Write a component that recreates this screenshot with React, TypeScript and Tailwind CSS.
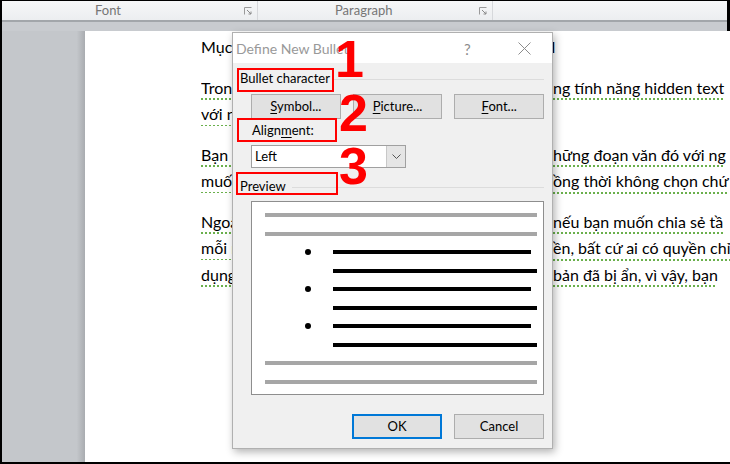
const docFont = { fontFamily: 'Lato, "Noto Sans", sans-serif' }
const uiFont = { fontFamily: 'Lato, "Noto Sans", sans-serif' }

function Launcher() {
  return (
    <svg width="8" height="8" viewBox="0 0 8 8" className="block">
      <path d="M0.5 7.5V0.5H7.5" fill="none" stroke="#9a9a9a" strokeWidth="1" />
      <path d="M3 3L7 7M7 4.5V7H4.5" fill="none" stroke="#8a8a8a" strokeWidth="1" />
    </svg>
  )
}

const lines = [
  { left: 'Mục đích', right: 'd', wavy: false, gap: 0, shift: true },
  { left: 'Trong', right: 'ng tính năng hidden text', wavy: true, gap: 14 },
  { left: 'với những', right: '', wavy: true, gap: 0 },
  { left: 'Bạn có', right: 'hững đoạn văn đó với ng', wavy: true, gap: 14 },
  { left: 'muốn', right: 'ồng thời không chọn chứ', wavy: true, gap: 0 },
  { left: 'Ngoài', right: 'nếu bạn muốn chia sẻ tầ', wavy: true, gap: 14 },
  { left: 'mỗi người', right: 'ền, bất cứ ai có quyền chỉ', wavy: true, gap: 0 },
  { left: 'dụng', right: 'bản đã bị ẩn, vì vậy, bạn', wavy: true, gap: 0 },
]

const wavy = 'underline decoration-dotted decoration-[#6ab04c] decoration-[1.5px] underline-offset-[5px]'

function Doc() {
  return (
    <div className="pl-[116px] pt-[3px] text-[16px] text-black" style={docFont}>
      {lines.map((l, i) => (
        <div key={i} className="flex h-[26.5px] items-center whitespace-nowrap" style={{ marginTop: l.gap }}>
          <span className={`w-[31px] shrink-0 overflow-hidden ${l.wavy ? wavy : ''}`}>{l.left}</span>
          <span className="w-[321px] shrink-0" />
          {l.right && (
            <span className={`${l.wavy ? wavy : ''} ${l.shift ? '-ml-[7px] font-bold' : ''}`}>{l.right}</span>
          )}
        </div>
      ))}
    </div>
  )
}

function Btn({ label, u, rest, primary }: { label?: string; u?: string; rest?: string; primary?: boolean }) {
  return (
    <div
      className={`flex h-[25px] w-[90px] items-center justify-center bg-[#e1e1e1] text-[13px] text-black ${
        primary ? 'border-2 border-[#0078d7]' : 'border border-[#adadad]'
      }`}
    >
      {label ? label : (
        <span>
          <span className="underline underline-offset-2">{u}</span>
          {rest}
        </span>
      )}
    </div>
  )
}

function PreviewRow({ kind, bullet }: { kind: 'gray' | 'short' | 'long'; bullet?: boolean }) {
  return (
    <div className="relative flex h-[18.5px] items-center">
      {kind === 'gray' ? (
        <div className="ml-[13px] mr-[6px] h-[4px] flex-1 bg-[#a6a6a6]" />
      ) : (
        <>
          <div className="flex w-[81px] shrink-0 justify-end pr-[22px]">
            {bullet && <div className="h-[6px] w-[6px] rounded-full bg-black" />}
          </div>
          <div className={`h-[4px] flex-1 bg-black ${kind === 'short' ? 'mr-[12px]' : 'mr-[6px]'}`} />
        </>
      )}
    </div>
  )
}

const numFont = { fontFamily: '"Liberation Sans", Arial, sans-serif' }

function Dialog() {
  return (
    <div
      className="absolute left-[147px] top-[1px] flex h-[417px] w-[321px] flex-col border border-[#b0b0b0] bg-[#f0f0f0] shadow-[2px_3px_8px_rgba(0,0,0,0.3)]"
      style={uiFont}
    >
      <div className="relative flex h-[30px] shrink-0 items-center bg-white pl-[3px] text-[14px] text-[#999999]">
        Define New Bullet
        <span className="absolute left-[231px] top-[5px] text-[15px] text-[#8c8c8c]">?</span>
        <svg className="absolute left-[285px] top-[9px]" width="13" height="13" viewBox="0 0 13 13">
          <path d="M0.5 0.5L12.5 12.5M12.5 0.5L0.5 12.5" stroke="#8c8c8c" strokeWidth="1" />
        </svg>
      </div>
      <div className="flex flex-1 flex-col pl-[6px] pr-[8px] text-[13px] text-black">
        <div className="mt-[7px] flex h-[18px] items-center">
          <span className="ml-[1px] mr-[4px]">Bullet character</span>
          <div className="h-px flex-1 bg-[#dcdcdc]" />
        </div>
        <div className="ml-[12px] mt-[6px] flex gap-[12px]">
          <Btn u="S" rest="ymbol..." />
          <Btn u="P" rest="icture..." />
          <Btn u="F" rest="ont..." />
        </div>
        <div className="ml-[13px] mt-[3px] flex h-[18px] items-center">
          Align<span className="underline underline-offset-2">m</span>ent:
        </div>
        <div className="ml-[12px] mt-[5px] flex h-[23px] w-[155px] border border-[#a0a0a0] bg-white">
          <div className="flex flex-1 items-center pl-[3px]">Left</div>
          <div className="flex w-[19px] items-center justify-center border-l border-[#c8c8c8] bg-[#e5e5e5]">
            <svg width="9" height="6" viewBox="0 0 9 6">
              <path d="M0.5 0.5L4.5 4.5L8.5 0.5" fill="none" stroke="#555" strokeWidth="1" />
            </svg>
          </div>
        </div>
        <div className="mt-[10px] flex h-[18px] items-center">
          <span className="ml-[1px] mr-[6px]">Preview</span>
          <div className="h-px flex-1 bg-[#dcdcdc]" />
        </div>
        <div className="ml-[12px] mt-[5px] flex h-[194px] flex-col border border-[#8e8e8e] bg-white pt-[4px]">
          <PreviewRow kind="gray" />
          <PreviewRow kind="gray" />
          <PreviewRow kind="short" bullet />
          <PreviewRow kind="long" />
          <PreviewRow kind="short" bullet />
          <PreviewRow kind="long" />
          <PreviewRow kind="short" bullet />
          <PreviewRow kind="long" />
          <PreviewRow kind="gray" />
          <PreviewRow kind="gray" />
        </div>
        <div className="mt-[19px] flex justify-end gap-[12px]">
          <Btn label="OK" primary />
          <Btn label="Cancel" />
        </div>
      </div>

      <div className="absolute left-[4px] top-[35px] h-[24px] w-[97px] border-2 border-[#ff0000]" />
      <div className="absolute left-[4px] top-[85px] h-[24px] w-[100px] border-2 border-[#ff0000]" />
      <div className="absolute left-[3px] top-[139px] h-[23px] w-[102px] border-2 border-[#ff0000]" />
      <div className="absolute left-[102px] top-[0px] text-[52px] font-bold leading-none text-[#ff0000]" style={numFont}>
        1
      </div>
      <div className="absolute left-[106px] top-[54px] text-[52px] font-bold leading-none text-[#ff0000]" style={numFont}>
        2
      </div>
      <div className="absolute left-[106px] top-[107px] text-[52px] font-bold leading-none text-[#ff0000]" style={numFont}>
        3
      </div>
    </div>
  )
}

export default function App() {
  return (
    <div className="h-[464px] w-[730px] overflow-hidden bg-black pb-[2px] pl-[2px] pr-[3px] pt-[1px]">
      <div className="flex h-full flex-col">
        <div
          className="flex h-[19px] shrink-0 items-center bg-gradient-to-b from-[#f6f7f8] to-[#eceef0] text-[13px] text-[#767676]"
          style={uiFont}
        >
          <div className="flex h-full w-[256px] items-center border-r border-[#d6d8db]">
            <span className="ml-[93px]">Font</span>
            <span className="ml-auto mr-[5px]"><Launcher /></span>
          </div>
          <div className="flex h-full w-[235px] items-center border-r border-[#d6d8db]">
            <span className="ml-[77px]">Paragraph</span>
            <span className="ml-auto mr-[5px]"><Launcher /></span>
          </div>
        </div>
        <div className="h-[11px] shrink-0 border-t-2 border-[#a2a6aa] bg-[#c8cbcf]" />
        <div className="flex flex-1">
          <div className="w-[83px] shrink-0 bg-gradient-to-r from-[#c4c7cb] from-[90%] to-[#a9acb0]" />
          <div className="relative flex-1 bg-white">
            <Doc />
            <Dialog />
          </div>
        </div>
      </div>
    </div>
  )
}
